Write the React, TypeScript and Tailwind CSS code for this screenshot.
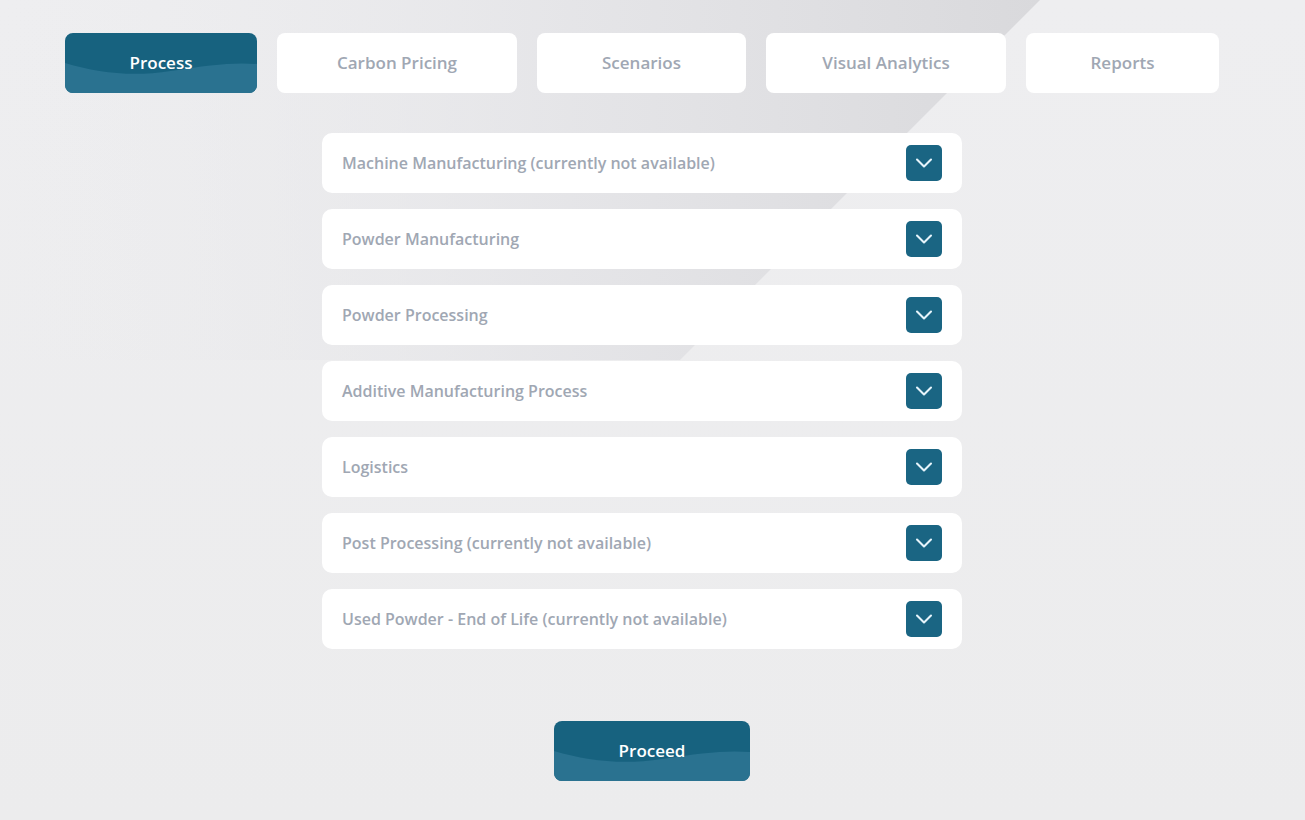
import { ChevronDown } from "lucide-react";

const tabs = [
  { label: "Process", width: "w-[192px]", active: true },
  { label: "Carbon Pricing", width: "w-[240px]" },
  { label: "Scenarios", width: "w-[209px]" },
  { label: "Visual Analytics", width: "w-[240px]" },
  { label: "Reports", width: "w-[193px]" },
];

const sections = [
  "Machine Manufacturing (currently not available)",
  "Powder Manufacturing",
  "Powder Processing",
  "Additive Manufacturing Process",
  "Logistics",
  "Post Processing (currently not available)",
  "Used Powder - End of Life (currently not available)",
];

const Wave = () => (
  <svg
    className="absolute inset-0 h-full w-full"
    viewBox="0 0 200 60"
    preserveAspectRatio="none"
  >
    <path d="M0 30 C35 40 70 44 110 38 C150 32 175 29 200 31 L200 60 L0 60 Z" fill="#2a7290" />
  </svg>
);

const Backdrop = () => (
  <svg className="absolute inset-0 h-full w-full" viewBox="0 0 1305 820" preserveAspectRatio="none">
    <defs>
      <linearGradient id="band" x1="0" y1="0" x2="1" y2="0">
        <stop offset="0" stopColor="#ececee" stopOpacity="0" />
        <stop offset="0.55" stopColor="#e4e4e7" stopOpacity="0.9" />
        <stop offset="1" stopColor="#d9d9dc" />
      </linearGradient>
      <linearGradient id="fadeDown" x1="0" y1="0" x2="0" y2="1">
        <stop offset="0" stopColor="#eeeef0" />
        <stop offset="1" stopColor="#ececed" />
      </linearGradient>
    </defs>
    <rect width="1305" height="820" fill="url(#fadeDown)" />
    <polygon points="0,0 1040,0 680,360 0,360" fill="url(#band)" />
  </svg>
);

const App = () => (
  <div
    className="relative min-h-[820px] w-full overflow-hidden bg-[#ececed]"
    style={{ fontFamily: '"Open Sans", "Noto Sans", sans-serif' }}
  >
    <Backdrop />
    <div className="relative w-[1284px] pt-[33px]">
      <nav className="flex justify-center gap-5">
        {tabs.map((tab) =>
          tab.active ? (
            <button
              key={tab.label}
              className={`relative h-[60px] ${tab.width} overflow-hidden rounded-lg bg-[#17627f] text-[17px] font-semibold text-white`}
            >
              <Wave />
              <span className="relative">{tab.label}</span>
            </button>
          ) : (
            <button
              key={tab.label}
              className={`h-[60px] ${tab.width} rounded-lg bg-white text-[17px] font-semibold text-[#a0a7b3]`}
            >
              {tab.label}
            </button>
          )
        )}
      </nav>

      <div className="mt-10 flex flex-col items-center gap-4">
        {sections.map((name) => (
          <div
            key={name}
            className="flex h-[60px] w-[640px] items-center justify-between rounded-[10px] bg-white pl-5 pr-5"
          >
            <span className="text-base font-semibold text-[#a0a7b3]">{name}</span>
            <span className="flex h-9 w-9 items-center justify-center rounded-[5px] bg-[#1a6583]">
              <ChevronDown className="h-7 w-7 text-[#e6f4fb]" strokeWidth={1.8} />
            </span>
          </div>
        ))}
      </div>
    </div>

    <div className="relative mt-[72px] flex pb-[39px] pl-[554px]">
      <button className="relative h-[60px] w-[196px] overflow-hidden rounded-lg bg-[#17627f] text-[17px] font-semibold text-white">
        <Wave />
        <span className="relative">Proceed</span>
      </button>
    </div>
  </div>
);

export default App;
